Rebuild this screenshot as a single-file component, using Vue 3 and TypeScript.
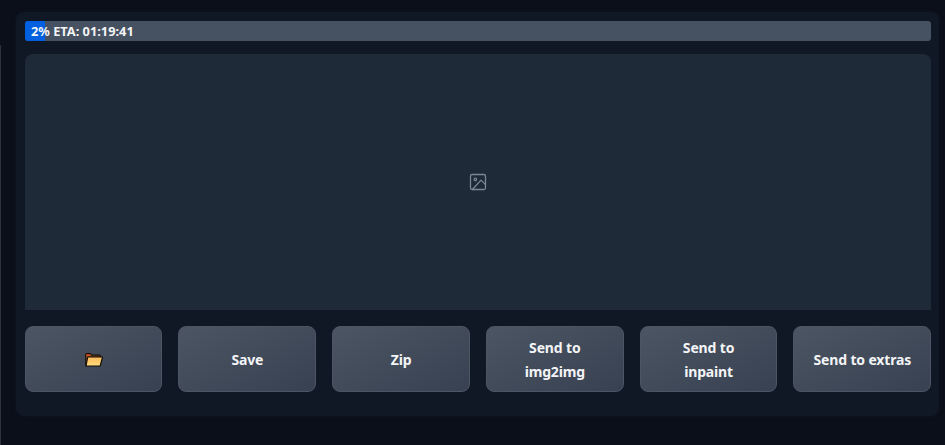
<script setup lang="ts">
const buttons: string[][] = [['Save'], ['Zip'], ['Send to', 'img2img'], ['Send to', 'inpaint'], ['Send to extras']]
</script>

<template>
  <div class="page">
    <div class="edge"></div>
    <section class="panel">
      <div class="progress">
        <div class="fill"></div>
        <span class="label">2% ETA: 01:19:41</span>
      </div>
      <div class="preview">
        <svg class="placeholder" width="18" height="18" viewBox="0 0 24 24" fill="none" stroke="currentColor" stroke-width="1.7" stroke-linecap="round" stroke-linejoin="round">
          <rect x="2" y="2" width="20" height="20" rx="2" />
          <circle cx="8.5" cy="8.5" r="1.6" />
          <path d="M22 15.5 16 9.5 4.5 22" />
        </svg>
      </div>
      <div class="actions">
        <button class="btn" type="button" aria-label="Open folder">
          <svg width="18" height="14" viewBox="0 0 18 14">
            <defs>
              <linearGradient id="folderFront" x1="0" y1="0" x2="0" y2="1">
                <stop offset="0" stop-color="#fdb95a" />
                <stop offset="1" stop-color="#fedd7c" />
              </linearGradient>
            </defs>
            <path d="M1 13 .7 1.9C.7 1 1.1.6 1.8.6h3.4l1.3 1.5h7.9c.6 0 .9.3.9.9v1.5H4z" fill="#b5622a" stroke="#120c06" stroke-width="1.2" stroke-linejoin="round" />
            <path d="M1.2 1.2h3.8l.8 1H1.2z" fill="#d8392b" />
            <path d="M1 13 2.6 4.5c.1-.5.3-.7.8-.7h13.3c.6 0 .8.3.7.8L15.2 13z" fill="url(#folderFront)" stroke="#120c06" stroke-width="1.2" stroke-linejoin="round" />
          </svg>
        </button>
        <button v-for="b in buttons" :key="b.join(' ')" class="btn" type="button">
          <span v-for="line in b" :key="line" class="line">{{ line }}</span>
        </button>
      </div>
    </section>
  </div>
</template>

<style>
html, body { margin: 0; background: #0b0f19; }
</style>

<style scoped>
.page {
  position: relative;
  box-sizing: border-box;
  width: 945px;
  height: 445px;
  padding: 12px 6px 0 16px;
  background: #0b0f19;
  font-family: "Noto Sans", "Open Sans", sans-serif;
  overflow: hidden;
}
.edge {
  position: absolute;
  left: 0;
  top: 45px;
  bottom: 0;
  width: 1px;
  background: #2b3340;
}
.panel {
  box-sizing: border-box;
  height: 404px;
  padding: 9px 7.8px 0 8.7px;
  background: #101725;
  border-radius: 8px;
  box-shadow: 0 0 4px rgba(16, 23, 37, 0.7);
  display: flex;
  flex-direction: column;
}
.progress {
  position: relative;
  height: 20px;
  background: #465161;
  border-radius: 3px;
  overflow: hidden;
}
.fill {
  position: absolute;
  inset: 0 auto 0 0;
  width: 20px;
  background: #0060df;
}
.label {
  position: absolute;
  left: 6.3px;
  top: 0;
  font-size: 12.8px;
  line-height: 20px;
  font-weight: 700;
  color: #f3f4f6;
  white-space: nowrap;
}
.preview {
  margin-top: 13px;
  height: 256px;
  background: #1f2a38;
  border-radius: 8px 8px 0 0;
  display: flex;
  align-items: center;
  justify-content: center;
}
.placeholder {
  color: #7d8794;
}
.actions {
  margin-top: 16px;
  display: grid;
  grid-template-columns: repeat(6, 1fr);
  gap: 16px;
}
.btn {
  box-sizing: border-box;
  height: 66px;
  padding: 1px 0 0;
  border: 1px solid #4b5563;
  border-radius: 8px;
  background: linear-gradient(to bottom right, #4b5563, #374151);
  color: #f3f4f6;
  font: 700 14px/24px "Noto Sans", "Open Sans", sans-serif;
  letter-spacing: -0.15px;
  display: flex;
  flex-direction: column;
  align-items: center;
  justify-content: center;
}
.line {
  display: block;
}
</style>
